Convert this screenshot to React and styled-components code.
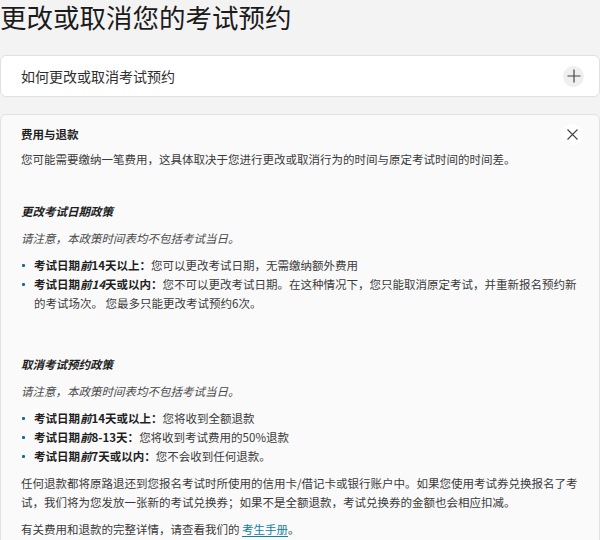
import React from "react";
import styled, { createGlobalStyle } from "styled-components";

const Global = createGlobalStyle`
  html, body { margin: 0; padding: 0; background: #f3f3f3; }
  body { font-family: "Open Sans", "Noto Sans CJK SC", sans-serif; color: #333; }
`;

const Page = styled.div`
  width: 600px;
  font-family: "Noto Sans CJK SC", sans-serif;
`;

const Heading = styled.h1`
  margin: 0;
  font-size: 26.5px;
  line-height: 34px;
  font-weight: 400;
  color: #1b1b1b;
  letter-spacing: 0;
`;

const Card = styled.div`
  margin-top: 21px;
  height: 42px;
  box-sizing: border-box;
  background: #fff;
  border: 1px solid #e0e0e0;
  border-radius: 6px;
  display: flex;
  align-items: center;
  justify-content: space-between;
  padding: 0 15px 0 20px;
`;

const CardTitle = styled.span`
  font-size: 14px;
  color: #2e2e2e;
`;

const RoundButton = styled.span`
  width: 21px;
  height: 21px;
  border-radius: 50%;
  background: ${(p) => p.$bg};
  display: flex;
  align-items: center;
  justify-content: center;
  flex: none;
`;

const Panel = styled.div`
  margin-top: 17px;
  background: #fafafa;
  border: 1px solid #e2e2e2;
  border-radius: 6px;
  padding: 9px 16px 40px 20px;
  font-size: 11.5px;
  line-height: 19px;
  color: #3a3a3a;
`;

const PanelHeader = styled.div`
  display: flex;
  align-items: center;
  justify-content: space-between;
  height: 21px;
`;

const PanelTitle = styled.span`
  font-weight: 700;
  color: #1f1f1f;
  font-size: 11.5px;
`;

const P = styled.p`
  margin: ${(p) => p.$mt || 8}px 0 0;
`;

const SectionTitle = styled.p`
  margin: ${(p) => p.$mt}px 0 0;
  font-weight: 700;
  font-style: italic;
  color: #1f1f1f;
`;

const Note = styled.p`
  margin: 8px 0 0;
  font-style: italic;
  color: #4a4a4a;
`;

const List = styled.ul`
  margin: 8px 0 0;
  padding: 0;
  list-style: none;
`;

const Item = styled.li`
  position: relative;
  padding-left: 13px;
  &::before {
    content: "";
    position: absolute;
    left: 1px;
    top: 8px;
    width: 3px;
    height: 3px;
    border-radius: 1px;
    background: #136f8c;
  }
`;

const Strong = styled.strong`
  font-weight: 700;
  color: #1f1f1f;
`;

const Em = styled.em`
  font-style: italic;
`;

const Link = styled.a`
  color: #13809f;
  text-decoration: underline;
  text-underline-offset: 2px;
`;

const Plus = () => (
  <svg width="14" height="14" viewBox="0 0 14 14">
    <path d="M7 0.5V13.5M0.5 7H13.5" stroke="#444" strokeWidth="1.2" fill="none" />
  </svg>
);

const Close = () => (
  <svg width="11" height="11" viewBox="0 0 11 11">
    <path d="M0.5 0.5L10.5 10.5M10.5 0.5L0.5 10.5" stroke="#444" strokeWidth="1.1" fill="none" />
  </svg>
);

export default function App() {
  return (
    <Page>
      <Global />
      <Heading>更改或取消您的考试预约</Heading>
      <Card>
        <CardTitle>如何更改或取消考试预约</CardTitle>
        <RoundButton $bg="#efefef">
          <Plus />
        </RoundButton>
      </Card>
      <Panel>
        <PanelHeader>
          <PanelTitle>费用与退款</PanelTitle>
          <RoundButton $bg="#ffffff">
            <Close />
          </RoundButton>
        </PanelHeader>
        <P $mt={5}>
          您可能需要缴纳一笔费用，这具体取决于您进行更改或取消行为的时间与原定考试时间的时间差。
        </P>
        <SectionTitle $mt={33}>更改考试日期政策</SectionTitle>
        <Note>请注意，本政策时间表均不包括考试当日。</Note>
        <List>
          <Item>
            <Strong>
              考试日期<Em>前</Em>14天以上：
            </Strong>
            您可以更改考试日期，无需缴纳额外费用
          </Item>
          <Item>
            <Strong>
              考试日期<Em>前14</Em>天或以内：
            </Strong>
            您不可以更改考试日期。在这种情况下，您只能取消原定考试，并重新报名预约新的考试场次。 您最多只能更改考试预约6次。
          </Item>
        </List>
        <SectionTitle $mt={42}>取消考试预约政策</SectionTitle>
        <Note>请注意，本政策时间表均不包括考试当日。</Note>
        <List>
          <Item>
            <Strong>
              考试日期<Em>前</Em>14天或以上：
            </Strong>
            您将收到全额退款
          </Item>
          <Item>
            <Strong>
              考试日期<Em>前</Em>8-13天：
            </Strong>
            您将收到考试费用的50%退款
          </Item>
          <Item>
            <Strong>
              考试日期<Em>前</Em>7天或以内：
            </Strong>
            您不会收到任何退款。
          </Item>
        </List>
        <P>
          任何退款都将原路退还到您报名考试时所使用的信用卡/借记卡或银行账户中。如果您使用考试券兑换报名了考试，我们将为您发放一张新的考试兑换券；如果不是全额退款，考试兑换券的金额也会相应扣减。
        </P>
        <P>
          有关费用和退款的完整详情，请查看我们的 <Link href="#">考生手册</Link>。
        </P>
      </Panel>
    </Page>
  );
}
